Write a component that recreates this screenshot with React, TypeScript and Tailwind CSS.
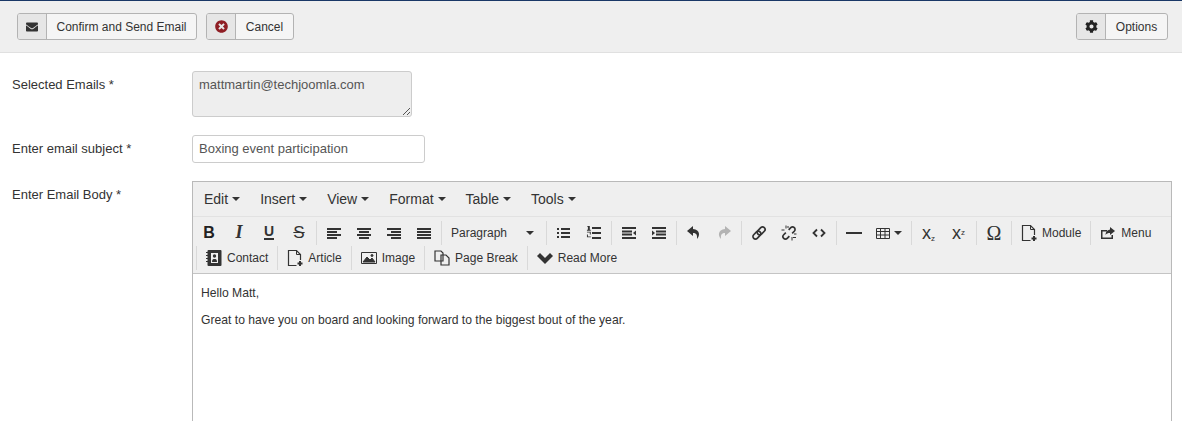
import type { ReactNode } from 'react';
import { FaCog, FaEnvelope, FaTimesCircle } from 'react-icons/fa';

const Caret = () => (
    <span className="ml-[4px] inline-block h-0 w-0 border-x-[4px] border-t-[4px] border-x-transparent border-t-[#333]" />
);

const Sep = () => <div className="mx-[2px] h-[24px] w-px bg-[#d9d9d9]" />;

const Icon = ({ children }: { children: ReactNode }) => (
    <svg width="16" height="16" viewBox="0 0 16 16" fill="#333" className="shrink-0">
        {children}
    </svg>
);

const ToolBtn = ({ children }: { children: ReactNode }) => (
    <div className="flex h-[24px] w-[30px] items-center justify-center">{children}</div>
);

const TextBtn = ({ icon, label }: { icon: ReactNode; label: string }) => (
    <div className="flex h-[24px] items-center gap-[5px] px-[7px] text-[12px] text-[#333]">
        {icon}
        <span>{label}</span>
    </div>
);

const Lines = ({ rows }: { rows: number[][] }) => (
    <Icon>
        {rows.map(([x, y, w, h], i) => (
            <rect key={i} x={x} y={y} width={w} height={h} />
        ))}
    </Icon>
);

const DocPlus = () => (
    <svg width="16" height="18" viewBox="0 0 16 18" fill="none" stroke="#333" className="shrink-0">
        <path d="M9.5 16.5H1.500V1.500H9.500L13.500 5.500V11" strokeWidth="1.200" />
        <path d="M9.500 1.500V5.500H13.500" strokeWidth="1" />
        <path d="M13 12V17M10.500 14.500H15.500" strokeWidth="2" />
    </svg>
);

const ActionBtn = ({ icon, label, textWidth }: { icon: ReactNode; label: string; textWidth: string }) => (
    <div className="flex h-[27px] overflow-hidden rounded-[3px] border border-[#b3b3b3] bg-[#f5f5f5] text-[12px] text-[#333]">
        <div className="flex w-[29px] items-center justify-center border-r border-[#b3b3b3] bg-[#e6e6e6]">{icon}</div>
        <div className={`flex items-center justify-center ${textWidth}`}>{label}</div>
    </div>
);

const Row = ({ label, className, labelClass, children }: { label: string; className: string; labelClass: string; children: ReactNode }) => (
    <div className={`flex ${className}`}>
        <label className={`w-[180px] shrink-0 text-[13px] leading-[18px] text-[#333] ${labelClass}`}>{label}</label>
        {children}
    </div>
);

const App = () => {
    return (
        <div className="h-[421px] w-[1182px] overflow-hidden bg-white font-['Liberation_Sans',Arial,sans-serif]">
            <div className="flex h-[53px] items-start justify-between border-t border-b border-t-[#1a3867] border-b-[#e0e0e0] bg-[#efefef] px-[14px] pt-[12px] pl-[17px]">
                <div className="flex gap-[9px]">
                    <ActionBtn icon={<FaEnvelope size={12} color="#333" />} label="Confirm and Send Email" textWidth="w-[149px]" />
                    <ActionBtn icon={<FaTimesCircle size={13} color="#8f1e24" />} label="Cancel" textWidth="w-[57px]" />
                </div>
                <ActionBtn icon={<FaCog size={13} color="#222" />} label="Options" textWidth="w-[61px]" />
            </div>

            <div className="pl-[12px] pr-[10px]">
                <Row label="Selected Emails *" className="pt-[18px]" labelClass="pt-[5px]">
                    <div className="relative h-[46px] w-[220px] rounded-[3px] border border-[#ccc] bg-[#eee] px-[6px] pt-[4px] text-[13px] leading-[18px] text-[#555]">
                        mattmartin@techjoomla.com
                        <svg width="9" height="9" viewBox="0 0 9 9" stroke="#555" className="absolute right-0 bottom-0">
                            <path d="M1 8L8 1M5 8L8 5" />
                        </svg>
                    </div>
                </Row>

                <Row label="Enter email subject *" className="mt-[18px] items-center" labelClass="">
                    <div className="flex h-[28px] w-[233px] items-center rounded-[3px] border border-[#ccc] bg-white px-[6px] text-[13px] text-[#555]">
                        Boxing event participation
                    </div>
                </Row>

                <Row label="Enter Email Body *" className="mt-[19px]" labelClass="pt-[4px]">
                    <div className="-mt-[1px] w-[980px] border border-b-0 border-[#b9b9b9]">
                        <div className="flex h-[35px] items-center gap-[20px] border-b border-[#e2e2e2] bg-[#efefef] pl-[11px] text-[14px] text-[#333]">
                            {['Edit', 'Insert', 'View', 'Format', 'Table', 'Tools'].map((item) => (
                                <div key={item} className="flex items-center">
                                    {item}
                                    <Caret />
                                </div>
                            ))}
                        </div>

                        <div className="h-[57px] border-b border-[#c4c4c4] bg-[#efefef] pl-[1px]">
                            <div className="flex h-[28px] items-center pt-[3px]">
                                <ToolBtn><span className="text-[16px] font-bold text-[#222]">B</span></ToolBtn>
                                <ToolBtn><span className="font-['Liberation_Serif'] text-[18px] font-bold text-[#333] italic">I</span></ToolBtn>
                                <ToolBtn><span className="border-b-2 border-[#333] text-[14px] leading-[13px] font-bold text-[#333]">U</span></ToolBtn>
                                <ToolBtn><span className="text-[17px] text-[#333] line-through">S</span></ToolBtn>
                                <Sep />
                                <ToolBtn><Lines rows={[[1, 3, 14, 2], [1, 6, 10, 2], [1, 9, 14, 2], [1, 12, 10, 2]]} /></ToolBtn>
                                <ToolBtn><Lines rows={[[1, 3, 14, 2], [3, 6, 10, 2], [1, 9, 14, 2], [3, 12, 10, 2]]} /></ToolBtn>
                                <ToolBtn><Lines rows={[[1, 3, 14, 2], [5, 6, 10, 2], [1, 9, 14, 2], [5, 12, 10, 2]]} /></ToolBtn>
                                <ToolBtn><Lines rows={[[1, 3, 14, 2], [1, 6, 14, 2], [1, 9, 14, 2], [1, 12, 14, 2]]} /></ToolBtn>
                                <Sep />
                                <div className="flex h-[24px] w-[100px] items-center justify-between pr-[10px] pl-[7px] text-[12px] text-[#333]">
                                    <span>Paragraph</span>
                                    <span className="inline-block h-0 w-0 border-x-[4px] border-t-[4px] border-x-transparent border-t-[#333]" />
                                </div>
                                <Sep />
                                <ToolBtn>
                                    <Lines rows={[[1, 3, 2, 2], [5, 3, 9, 2], [1, 7, 2, 2], [5, 7, 9, 2], [1, 11, 2, 2], [5, 11, 9, 2]]} />
                                </ToolBtn>
                                <ToolBtn>
                                    <Icon>
                                        <rect x="6" y="2" width="9" height="2" />
                                        <rect x="6" y="7" width="9" height="2" />
                                        <rect x="6" y="12" width="9" height="2" />
                                        <path d="M2 1h2v4h1v1H1V5h1V2H1zM1 7h4v3H2v2h3v1H1v-3h3V8H1z" transform="scale(0.95)" />
                                    </Icon>
                                </ToolBtn>
                                <Sep />
                                <ToolBtn>
                                    <Icon>
                                        <rect x="1" y="2" width="14" height="2" />
                                        <rect x="1" y="5.500" width="10" height="2" />
                                        <rect x="1" y="8.500" width="10" height="2" />
                                        <path d="M15 5.500l-3 2.500 3 2.500z" />
                                        <rect x="1" y="12" width="14" height="2" />
                                    </Icon>
                                </ToolBtn>
                                <ToolBtn>
                                    <Icon>
                                        <rect x="1" y="2" width="14" height="2" />
                                        <path d="M1 5.500l3 2.500-3 2.500z" />
                                        <rect x="5" y="5.500" width="10" height="2" />
                                        <rect x="5" y="8.500" width="10" height="2" />
                                        <rect x="1" y="12" width="14" height="2" />
                                    </Icon>
                                </ToolBtn>
                                <Sep />
                                <ToolBtn>
                                    <Icon><path d="M7 1L1 6l6 5V8c3 0 4.500 1.500 4 6 3-3 3.500-9-4-10z" /></Icon>
                                </ToolBtn>
                                <ToolBtn>
                                    <svg width="16" height="16" viewBox="0 0 16 16" fill="#b3b3b3"><path d="M9 1l6 5-6 5V8c-3 0-4.500 1.500-4 6-3-3-3.500-9 4-10z" /></svg>
                                </ToolBtn>
                                <Sep />
                                <ToolBtn>
                                    <svg width="16" height="16" viewBox="0 0 16 16" fill="none" stroke="#333" strokeWidth="1.700">
                                        <g transform="rotate(-45 8 8)">
                                            <rect x="0.500" y="5.500" width="9" height="5" rx="2.500" />
                                            <rect x="6.500" y="5.500" width="9" height="5" rx="2.500" />
                                        </g>
                                    </svg>
                                </ToolBtn>
                                <ToolBtn>
                                    <svg width="16" height="16" viewBox="0 0 16 16" fill="none" stroke="#333" strokeWidth="1.700">
                                        <g transform="rotate(-45 8 8)">
                                            <path d="M6 5.500H3a2.500 2.500 0 0 0 0 5H6" />
                                            <path d="M10 5.500h3a2.500 2.500 0 0 1 0 5H10" />
                                        </g>
                                        <path d="M5 0.500v3M0.500 5h3M12 12.500h3M11 12v3.500M7 1v2M13 9h2.500" strokeWidth="1" />
                                    </svg>
                                </ToolBtn>
                                <ToolBtn>
                                    <svg width="16" height="16" viewBox="0 0 16 16" fill="none" stroke="#333" strokeWidth="1.800">
                                        <path d="M6 4.500L2.500 8 6 11.500M10 4.500L13.500 8 10 11.500" />
                                    </svg>
                                </ToolBtn>
                                <Sep />
                                <ToolBtn><Lines rows={[[0, 7, 16, 2]]} /></ToolBtn>
                                <div className="flex h-[24px] w-[40px] items-center pl-[7px]">
                                    <svg width="14" height="12" viewBox="0 0 14 12" fill="none" stroke="#333">
                                        <path d="M.5 1.500h13v10H.5zM.5 4.500h13M.5 8h13M4.500 1.500v10M9 1.500v10" />
                                    </svg>
                                    <Caret />
                                </div>
                                <Sep />
                                <ToolBtn><span className="-ml-[1px] text-[18px] leading-none text-[#333]">x<sub className="text-[8px]">z</sub></span></ToolBtn>
                                <ToolBtn><span className="-ml-[1px] text-[18px] leading-none text-[#333]">x<sup className="text-[8px]">z</sup></span></ToolBtn>
                                <Sep />
                                <div className="flex h-[24px] w-[30px] items-center justify-center">
                                    <span className="font-['Liberation_Serif'] text-[20px] leading-none text-[#333]">Ω</span>
                                </div>
                                <Sep />
                                <TextBtn icon={<DocPlus />} label="Module" />
                                <Sep />
                                <TextBtn
                                    icon={
                                        <Icon>
                                            <path d="M1 5h6v1.500H2.500v6h9V10H13v4H1z" />
                                            <path d="M10 2l5 4-5 4V8c-2 0-3.500.500-4.500 2 0-3 1.500-5 4.500-5.500z" />
                                        </Icon>
                                    }
                                    label="Menu"
                                />
                            </div>
                            <div className="flex h-[26px] items-center">
                                <Sep />
                                <TextBtn
                                    icon={
                                        <Icon>
                                            <rect x="1.500" y="0" width="14" height="16" rx="1" />
                                            <path d="M0 2.500h2M0 5.500h2M0 8.500h2M0 11.500h2" stroke="#333" strokeWidth="1" />
                                            <rect x="5" y="3" width="7" height="10" fill="#efefef" />
                                            <circle cx="8.500" cy="6" r="1.700" />
                                            <path d="M6 12c0-2.500 1-3 2.500-3s2.500.500 2.500 3z" />
                                        </Icon>
                                    }
                                    label="Contact"
                                />
                                <Sep />
                                <TextBtn icon={<DocPlus />} label="Article" />
                                <Sep />
                                <TextBtn
                                    icon={
                                        <svg width="16" height="14" viewBox="0 0 16 14" fill="none" stroke="#333" className="shrink-0">
                                            <path d="M.5 1.500h15v11H.5z" />
                                            <path d="M2 11l4-5 3 3 2-2 3 4z" fill="#333" />
                                            <circle cx="11" cy="4.500" r="1" fill="#333" />
                                        </svg>
                                    }
                                    label="Image"
                                />
                                <Sep />
                                <TextBtn
                                    icon={
                                        <svg width="16" height="16" viewBox="0 0 16 16" fill="none" stroke="#333" strokeWidth="1.200" className="shrink-0">
                                            <path d="M1 1h6l2 2v8H1zM7 5h5l3 3v7H7z" />
                                        </svg>
                                    }
                                    label="Page Break"
                                />
                                <Sep />
                                <TextBtn
                                    icon={
                                        <Icon>
                                            <path d="M0 6l3-3 5 5 5-5 3 3-8 8z" />
                                        </Icon>
                                    }
                                    label="Read More"
                                />
                            </div>
                        </div>

                        <div className="h-[200px] bg-white px-[8px] pt-[12px] text-[12.17px] text-[#333]">
                            <p className="leading-[14px]">Hello Matt,</p>
                            <p className="mt-[13px] leading-[14px]">Great to have you on board and looking forward to the biggest bout of the year.</p>
                        </div>
                    </div>
                </Row>
            </div>
        </div>
    );
};

export default App;
